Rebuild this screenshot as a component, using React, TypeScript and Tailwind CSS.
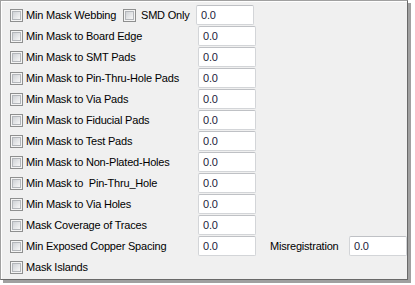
import React from "react";

const rows: { label: string; value?: string }[] = [
  { label: "Min Mask to Board Edge", value: "0.0" },
  { label: "Min Mask to SMT Pads", value: "0.0" },
  { label: "Min Mask to Pin-Thru-Hole Pads", value: "0.0" },
  { label: "Min Mask to Via Pads", value: "0.0" },
  { label: "Min Mask to Fiducial Pads", value: "0.0" },
  { label: "Min Mask to Test Pads", value: "0.0" },
  { label: "Min Mask to Non-Plated-Holes", value: "0.0" },
  { label: "Min Mask to  Pin-Thru_Hole", value: "0.0" },
  { label: "Min Mask to Via Holes", value: "0.0" },
  { label: "Mask Coverage of Traces", value: "0.0" },
];

function Check() {
  return (
    <div className="flex h-[13px] w-[13px] shrink-0 items-center justify-center border border-[#8e8f8f] bg-[#f4f4f4]">
      <div className="h-[9px] w-[9px] border border-[#b3b6ba] bg-gradient-to-br from-[#cfd2d6] to-[#f7f7f7]" />
    </div>
  );
}

function Field({ value }: { value: string }) {
  return (
    <div className="flex h-[20px] w-[58px] shrink-0 items-center rounded-[2px] border border-[#d3d5d8] border-t-[#bfc1c5] bg-white pl-[4px] text-[#1c1c3a]">
      {value}
    </div>
  );
}

export default function App() {
  return (
    <div className="h-[285px] w-[415px] bg-white">
      <div
        className="h-[280px] w-[408px] border-t border-l border-r border-b border-t-[#a0a0a0] border-l-[#a0a0a0] border-r-[#696969] border-b-[#696969] bg-[#f0f0f0] pt-[4px] pl-[9px] text-[11px] tracking-[-0.2px] text-black shadow-[3px_3px_0_#a0a0a0,inset_1px_1px_0_#ffffff]"
        style={{ fontFamily: '"Liberation Sans", Arial, sans-serif' }}
      >
        <div className="flex flex-col gap-[1px]">
          <div className="flex h-[20px] items-center">
            <Check />
            <span className="ml-[3px] w-[97px] whitespace-pre">Min Mask Webbing</span>
            <Check />
            <span className="ml-[5px] w-[55px] whitespace-pre">SMD Only</span>
            <Field value="0.0" />
          </div>
          {rows.map((r) => (
            <div key={r.label} className="flex h-[20px] items-center">
              <Check />
              <span className="ml-[3px] w-[172px] whitespace-pre">{r.label}</span>
              <Field value={r.value!} />
            </div>
          ))}
          <div className="flex h-[20px] items-center">
            <Check />
            <span className="ml-[3px] w-[172px] whitespace-pre">Min Exposed Copper Spacing</span>
            <Field value="0.0" />
            <span className="ml-[14px] w-[79px] whitespace-pre">Misregistration</span>
            <Field value="0.0" />
          </div>
          <div className="flex h-[20px] items-center">
            <Check />
            <span className="ml-[3px] whitespace-pre">Mask Islands</span>
          </div>
        </div>
      </div>
    </div>
  );
}
